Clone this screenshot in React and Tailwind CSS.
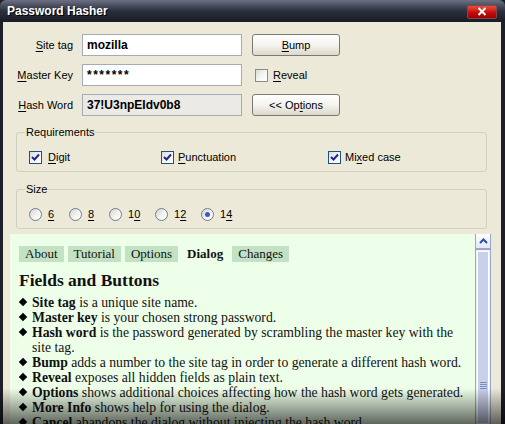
import React from 'react';

const ui = { fontFamily: '"Liberation Sans", Arial, sans-serif' };
const serif = { fontFamily: '"Liberation Serif", "Times New Roman", serif' };

function Key({ children }) {
  return <span className="underline underline-offset-[2px]">{children}</span>;
}

function CheckBox({ checked }) {
  return (
    <span className="w-[13px] h-[13px] shrink-0 border border-[#1c5180] bg-gradient-to-br from-[#dcdcd6] via-[#f4f4f0] to-white flex items-center justify-center">
      {checked && (
        <svg width="9" height="9" viewBox="0 0 9 9">
          <path d="M1 4 L3.5 6.5 L8 1.5" fill="none" stroke="#21219c" strokeWidth="2" />
        </svg>
      )}
    </span>
  );
}

function Radio({ checked }) {
  return (
    <span className="w-[13px] h-[13px] shrink-0 rounded-full border border-[#6f7f96] bg-gradient-to-br from-[#d4d4cc] via-[#f2f2ee] to-white flex items-center justify-center">
      {checked && <span className="w-[5px] h-[5px] rounded-full bg-[#3a5cc2]" />}
    </span>
  );
}

function XpButton({ children }) {
  return (
    <button className="w-[88px] h-[22px] rounded-[3px] border border-[#7a7a72] bg-gradient-to-b from-white via-[#f4f3ee] to-[#dcd9cc] text-[11px] text-black flex items-center justify-center">
      {children}
    </button>
  );
}

function Field({ value, readOnly, stars }) {
  return (
    <div
      className={`w-[160px] h-[22px] border border-[#a5acb5] flex items-center pl-[4px] text-[12px] font-bold text-black ${
        readOnly ? 'bg-[#ebeae4]' : 'bg-white'
      } ${stars ? 'tracking-[1.5px]' : ''}`}
    >
      {value}
    </div>
  );
}

const items = [
  ['Site tag', ' is a unique site name.'],
  ['Master key', ' is your chosen strong password.'],
  ['Hash word', ' is the password generated by scrambling the master key with the site tag.'],
  ['Bump', ' adds a number to the site tag in order to generate a different hash word.'],
  ['Reveal', ' exposes all hidden fields as plain text.'],
  ['Options', ' shows additional choices affecting how the hash word gets generated.'],
  ['More Info', ' shows help for using the dialog.'],
  ['Cancel', ' abandons the dialog without injecting the hash word.'],
];

export default function App() {
  return (
    <div className="w-[505px] h-[424px] overflow-hidden relative bg-[#1d1f2a] flex flex-col" style={ui}>
      {/* title bar */}
      <div className="h-[22px] shrink-0 rounded-t-[6px] bg-gradient-to-b from-[#6c7184] via-[#2c2f3e] to-[#191b25] flex items-center justify-between pl-[7px] pr-[8px]">
        <span className="text-[12px] text-white font-bold [text-shadow:1px_1px_0_#000]">Password Hasher</span>
        <div className="w-[30px] h-[14px] mt-[1px] rounded-[2px] border border-[#7a4a4a] bg-gradient-to-b from-[#ee4a3a] via-[#c81010] to-[#a00000] flex items-center justify-center">
          <svg width="10" height="9" viewBox="0 0 10 9">
            <path d="M1.5 1 L8.5 8 M8.5 1 L1.5 8" stroke="white" strokeWidth="2" />
          </svg>
        </div>
      </div>

      {/* body */}
      <div className="flex-1 ml-[3px] mr-[4px] bg-[#ece9d8] flex flex-col min-h-0">
        {/* form */}
        <div className="pt-[12px] flex flex-col gap-[8px] text-[11px] text-black">
          <div className="flex items-center">
            <span className="w-[70px] text-right"><Key>S</Key>ite tag</span>
            <div className="ml-[9px]"><Field value="mozilla" /></div>
            <div className="ml-[10px]"><XpButton><Key>B</Key>ump</XpButton></div>
          </div>
          <div className="flex items-center">
            <span className="w-[70px] text-right"><Key>M</Key>aster Key</span>
            <div className="ml-[9px]"><Field value="*******" stars /></div>
            <div className="ml-[13px] flex items-center gap-[5px]">
              <span className="w-[13px] h-[13px] border border-[#8c8c84] bg-gradient-to-br from-[#dcdcd6] via-[#f4f4f0] to-white" />
              <span><Key>R</Key>eveal</span>
            </div>
          </div>
          <div className="flex items-center">
            <span className="w-[70px] text-right"><Key>H</Key>ash Word</span>
            <div className="ml-[9px]"><Field value="37!U3npEIdv0b8" readOnly /></div>
            <div className="ml-[10px]"><XpButton>&lt;&lt; Op<Key>t</Key>ions</XpButton></div>
          </div>
        </div>

        {/* requirements */}
        <fieldset className="mt-[10px] ml-[13px] mr-[14px] border border-[#d0d0bf] rounded-[3px] pl-[8px] pb-[6px] text-[11px] text-black">
          <legend className="px-[1px] leading-[13px]">Requirements</legend>
          <div className="ml-[4px] mt-[10px] h-[16px] flex items-center">
            <div className="w-[132px] flex items-center gap-[6px]">
              <CheckBox checked />
              <span><Key>D</Key>igit</span>
            </div>
            <div className="w-[167px] flex items-center gap-[4px]">
              <CheckBox checked />
              <span><Key>P</Key>unctuation</span>
            </div>
            <div className="flex items-center gap-[4px]">
              <CheckBox checked />
              <span>Mi<Key>x</Key>ed case</span>
            </div>
          </div>
        </fieldset>

        {/* size */}
        <fieldset className="mt-[11px] ml-[13px] mr-[14px] border border-[#d0d0bf] rounded-[3px] pl-[8px] pb-[6px] text-[11px] text-black">
          <legend className="px-[1px] leading-[13px]">Size</legend>
          <div className="ml-[4px] mt-[10px] h-[16px] flex items-center">
            {[
              ['6', '', '6', 40],
              ['8', '', '8', 40],
              ['10', '1', '0', 46],
              ['12', '1', '2', 46],
              ['14', '1', '4', 46],
            ].map(([v, a, b, w]) => (
              <div key={v} className="flex items-center gap-[6px]" style={{ width: w }}>
                <Radio checked={v === '14'} />
                <span>{a}<Key>{b}</Key></span>
              </div>
            ))}
          </div>
        </fieldset>

        {/* help panel */}
        <div className="mt-[5px] ml-[7px] mr-[10px] flex-1 flex min-h-0">
          <div className="flex-1 bg-[#eeffe9] pl-[9px] pr-[6px] pt-[12px] text-[#111]" style={serif}>
            <div className="flex gap-[4px] text-[13px] leading-[16px]">
              <span className="bg-[#c3e2c3] px-[6px]">About</span>
              <span className="bg-[#c3e2c3] px-[6px]">Tutorial</span>
              <span className="bg-[#c3e2c3] px-[6px]">Options</span>
              <span className="px-[5px] font-bold">Dialog</span>
              <span className="bg-[#c3e2c3] px-[6px]">Changes</span>
            </div>
            <h2 className="mt-[7px] text-[17.5px] font-bold leading-[22px]">Fields and Buttons</h2>
            <ul className="mt-[4px] text-[13.7px] leading-[15px]">
              {items.map(([b, t]) => (
                <li key={b} className="flex">
                  <span className="w-[13px] shrink-0 flex justify-start pt-[4px] pl-[1px]">
                    <span className="w-[6px] h-[6px] bg-black rotate-45" />
                  </span>
                  <span>
                    <b>{b}</b>
                    {t}
                  </span>
                </li>
              ))}
            </ul>
          </div>
          {/* scrollbar */}
          <div className="w-[16px] shrink-0 border-x border-[#9aa6cc] bg-[#eef0f8] flex flex-col">
            <div className="h-[16px] bg-gradient-to-b from-white to-[#e4e8f4] border-b-2 border-[#9aa6cc] flex items-center justify-center">
              <svg width="9" height="6" viewBox="0 0 9 6">
                <path d="M1 5 L4.5 1.5 L8 5" fill="none" stroke="#2d4ea8" strokeWidth="2" />
              </svg>
            </div>
            <div className="flex-1 mt-[1px] mx-[1px] border border-white bg-[#c9d0ea] flex flex-col items-center pt-[130px]">
              <div className="flex flex-col gap-[1px]">
                <span className="w-[7px] h-[1px] bg-[#7d8dc0]" />
                <span className="w-[7px] h-[1px] bg-[#7d8dc0]" />
                <span className="w-[7px] h-[1px] bg-[#7d8dc0]" />
                <span className="w-[7px] h-[1px] bg-[#7d8dc0]" />
              </div>
            </div>
          </div>
        </div>
      </div>

      {/* bottom screen shadow */}
      <div className="absolute left-0 right-0 bottom-0 h-[36px] bg-gradient-to-b from-transparent to-black/60 pointer-events-none" />
    </div>
  );
}
